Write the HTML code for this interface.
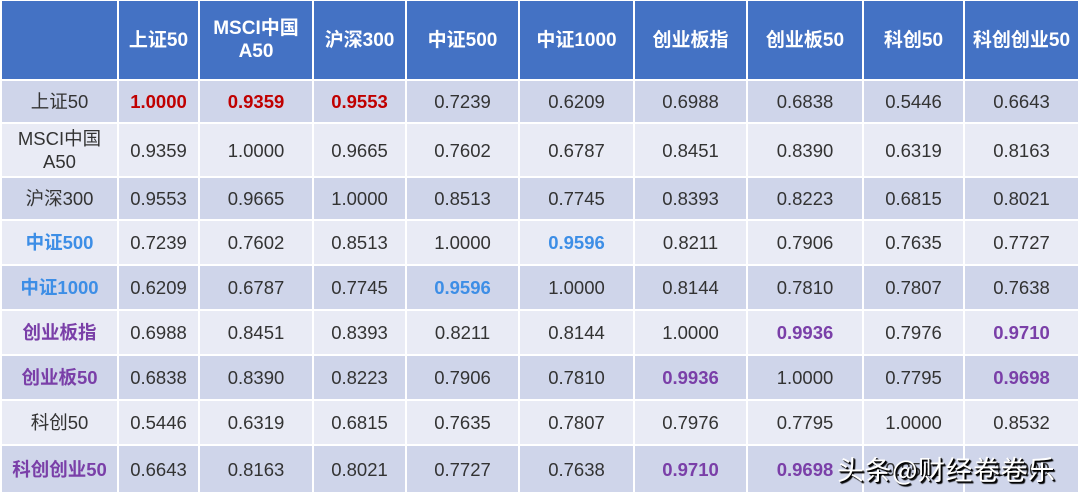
<!DOCTYPE html>
<html><head><meta charset="utf-8"><style>
body{margin:0;background:#fff;width:1080px;height:496px;overflow:hidden;position:relative;font-family:"Liberation Sans","Noto Sans CJK SC",sans-serif;}
table{position:absolute;left:0;top:-1px;border-collapse:collapse;table-layout:fixed;}
td{border:2px solid #fff;text-align:center;font-size:18.5px;color:#333;padding:0;line-height:23px;}
tr.h td{background:#4472c4;color:#fff;font-weight:bold;font-size:19px;}
tr.o td{background:#cfd5ea;}
tr.e td{background:#e9ebf5;}
.r{color:#c00000;font-weight:bold}
.b{color:#3d8ee6;font-weight:bold}
.p{color:#7a3fa8;font-weight:bold}
.wm{position:absolute;left:837px;top:449px;font-size:27px;letter-spacing:0.5px;color:#fff;text-shadow:1px 1px 0 #000,2px 2px 1px #000;font-family:"Noto Sans CJK SC",sans-serif;}
</style></head><body>
<table>
<colgroup><col style="width:117px"><col style="width:81px"><col style="width:114px"><col style="width:93px"><col style="width:113px"><col style="width:115px"><col style="width:113px"><col style="width:116px"><col style="width:101px"><col style="width:115px"></colgroup>
<tr class="h" style="height:80px"><td></td><td>上证50</td><td>MSCI中国<br>A50</td><td>沪深300</td><td>中证500</td><td>中证1000</td><td>创业板指</td><td>创业板50</td><td>科创50</td><td>科创创业50</td></tr>
<tr class="o" style="height:43px"><td>上证50</td><td class="r">1.0000</td><td class="r">0.9359</td><td class="r">0.9553</td><td>0.7239</td><td>0.6209</td><td>0.6988</td><td>0.6838</td><td>0.5446</td><td>0.6643</td></tr>
<tr class="e" style="height:54px"><td>MSCI中国<br>A50</td><td>0.9359</td><td>1.0000</td><td>0.9665</td><td>0.7602</td><td>0.6787</td><td>0.8451</td><td>0.8390</td><td>0.6319</td><td>0.8163</td></tr>
<tr class="o" style="height:43px"><td>沪深300</td><td>0.9553</td><td>0.9665</td><td>1.0000</td><td>0.8513</td><td>0.7745</td><td>0.8393</td><td>0.8223</td><td>0.6815</td><td>0.8021</td></tr>
<tr class="e" style="height:45px"><td class="b">中证500</td><td>0.7239</td><td>0.7602</td><td>0.8513</td><td>1.0000</td><td class="b">0.9596</td><td>0.8211</td><td>0.7906</td><td>0.7635</td><td>0.7727</td></tr>
<tr class="o" style="height:45px"><td class="b">中证1000</td><td>0.6209</td><td>0.6787</td><td>0.7745</td><td class="b">0.9596</td><td>1.0000</td><td>0.8144</td><td>0.7810</td><td>0.7807</td><td>0.7638</td></tr>
<tr class="e" style="height:45px"><td class="p">创业板指</td><td>0.6988</td><td>0.8451</td><td>0.8393</td><td>0.8211</td><td>0.8144</td><td>1.0000</td><td class="p">0.9936</td><td>0.7976</td><td class="p">0.9710</td></tr>
<tr class="o" style="height:45px"><td class="p">创业板50</td><td>0.6838</td><td>0.8390</td><td>0.8223</td><td>0.7906</td><td>0.7810</td><td class="p">0.9936</td><td>1.0000</td><td>0.7795</td><td class="p">0.9698</td></tr>
<tr class="e" style="height:45px"><td>科创50</td><td>0.5446</td><td>0.6319</td><td>0.6815</td><td>0.7635</td><td>0.7807</td><td>0.7976</td><td>0.7795</td><td>1.0000</td><td>0.8532</td></tr>
<tr class="o" style="height:48px"><td class="p">科创创业50</td><td>0.6643</td><td>0.8163</td><td>0.8021</td><td>0.7727</td><td>0.7638</td><td class="p">0.9710</td><td class="p">0.9698</td><td>0.8532</td><td>1.0000</td></tr>
</table>
<div class="wm">头条@财经卷卷乐</div>
</body></html>
